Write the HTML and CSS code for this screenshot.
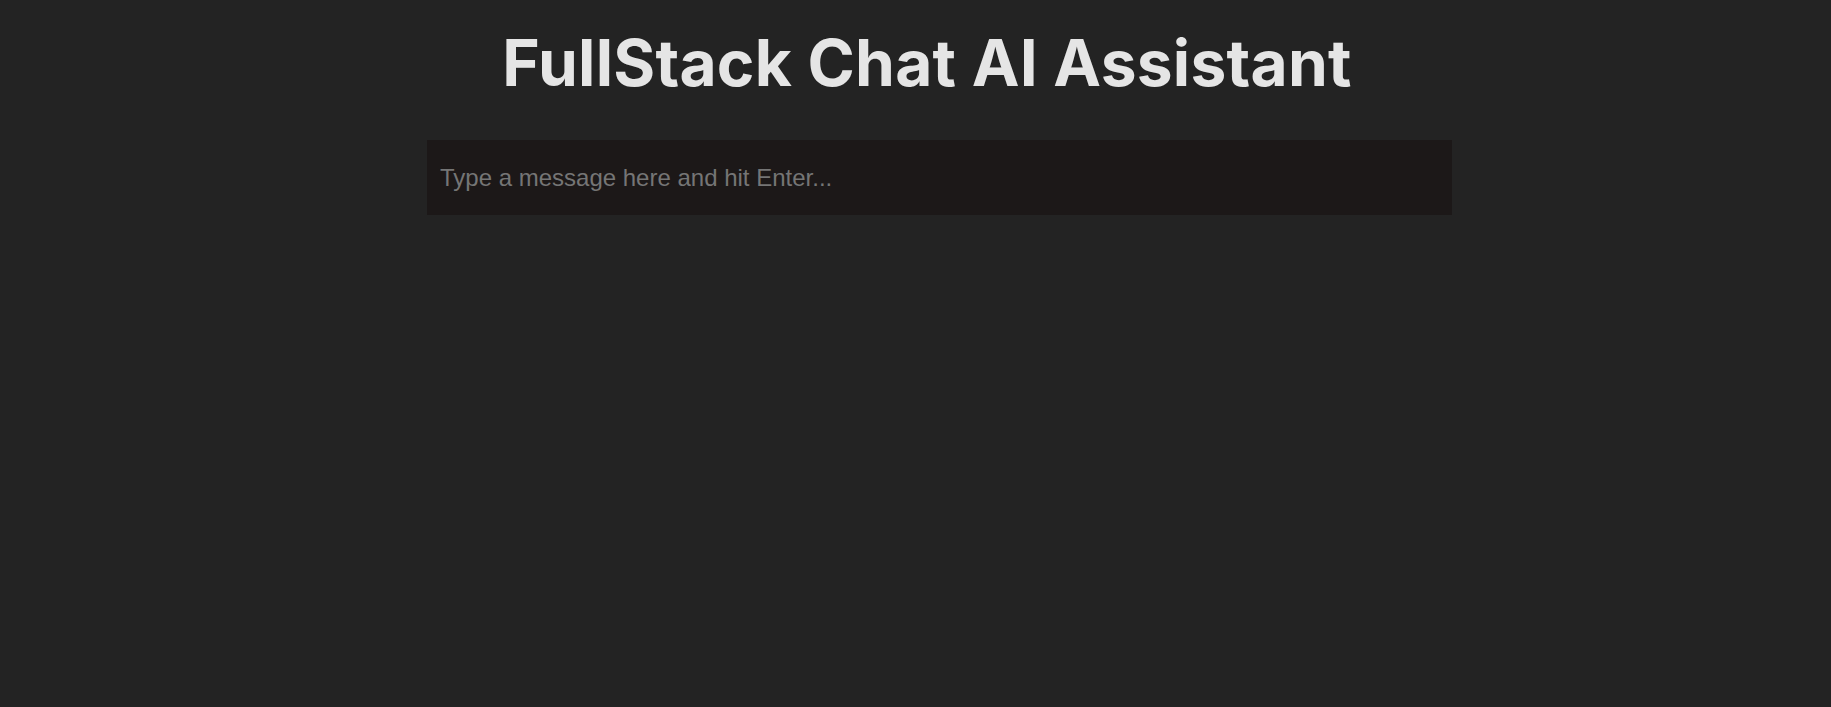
FILE: index.html
```html
<!DOCTYPE html>
<html lang="en">
<head>
<meta charset="utf-8">
<title>FullStack Chat AI Assistant</title>
<link rel="stylesheet" href="styles.css">
</head>
<body>
<main class="app">
  <h1 class="title">FullStack Chat AI Assistant</h1>
  <div class="chat">
    <input class="prompt" type="text" placeholder="Type a message here and hit Enter...">
  </div>
</main>
</body>
</html>
```

FILE: styles.css
```css
html, body {
  margin: 0;
  padding: 0;
  background: #232323;
  height: 100%;
}
.app {
  width: 1025px;
  margin-left: 427px;
  padding-top: 24px;
}
.title {
  margin: 0;
  padding-right: 25px;
  text-align: center;
  font-family: Inter, "Liberation Sans", sans-serif;
  font-weight: 700;
  font-size: 64px;
  line-height: 78px;
  letter-spacing: 0.25px;
  color: #e5e5e5;
}
.chat {
  margin-top: 38px;
}
.prompt {
  display: block;
  box-sizing: border-box;
  width: 100%;
  height: 75px;
  margin: 0;
  padding: 0 13px;
  border: none;
  outline: none;
  background: #1c1818;
  color: #e5e5e5;
  font-family: "Liberation Sans", Arial, sans-serif;
  font-size: 24px;
}
.prompt::placeholder {
  color: #757575;
  opacity: 1;
}
```
